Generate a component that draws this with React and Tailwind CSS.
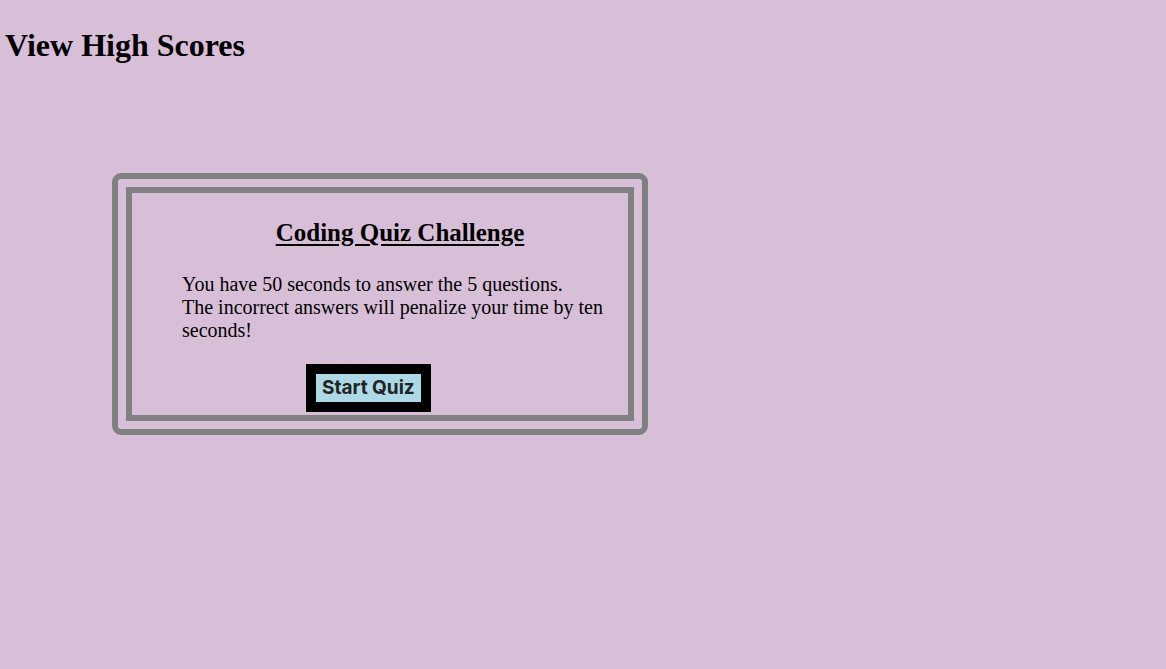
export default function App() {
  return (
    <div className="min-h-screen bg-[#d8bfd8] text-black font-['Liberation_Serif','Times_New_Roman',serif]">
      <header className="pl-[5px] pt-[27px]">
        <h1 className="text-[32px] font-bold leading-[37px]">View High Scores</h1>
      </header>

      <main className="ml-[112px] mt-[109px] w-[536px]">
        <div className="border-[6px] border-[#808080] rounded-[9px] p-[8px]">
          <div className="border-[6px] border-[#808080] pl-[50px] pr-[10px] pt-[25px] pb-[3px]">
            <h2 className="text-center text-[25px] font-bold underline underline-offset-[3px] leading-[29px]">
              Coding Quiz Challenge
            </h2>
            <p className="mt-[26px] text-[20px] leading-[23px]">
              You have 50 seconds to answer the 5 questions.
              <br />
              The incorrect answers will penalize your time by ten seconds!
            </p>
            <button className="block mt-[22px] ml-[124px] border-[10px] border-black bg-[#add8e6] px-[6px] py-[2px] text-[19px] leading-[24px] font-bold text-[#222] font-['Inter','Liberation_Sans',sans-serif]">
              Start Quiz
            </button>
          </div>
        </div>
      </main>
    </div>
  );
}
